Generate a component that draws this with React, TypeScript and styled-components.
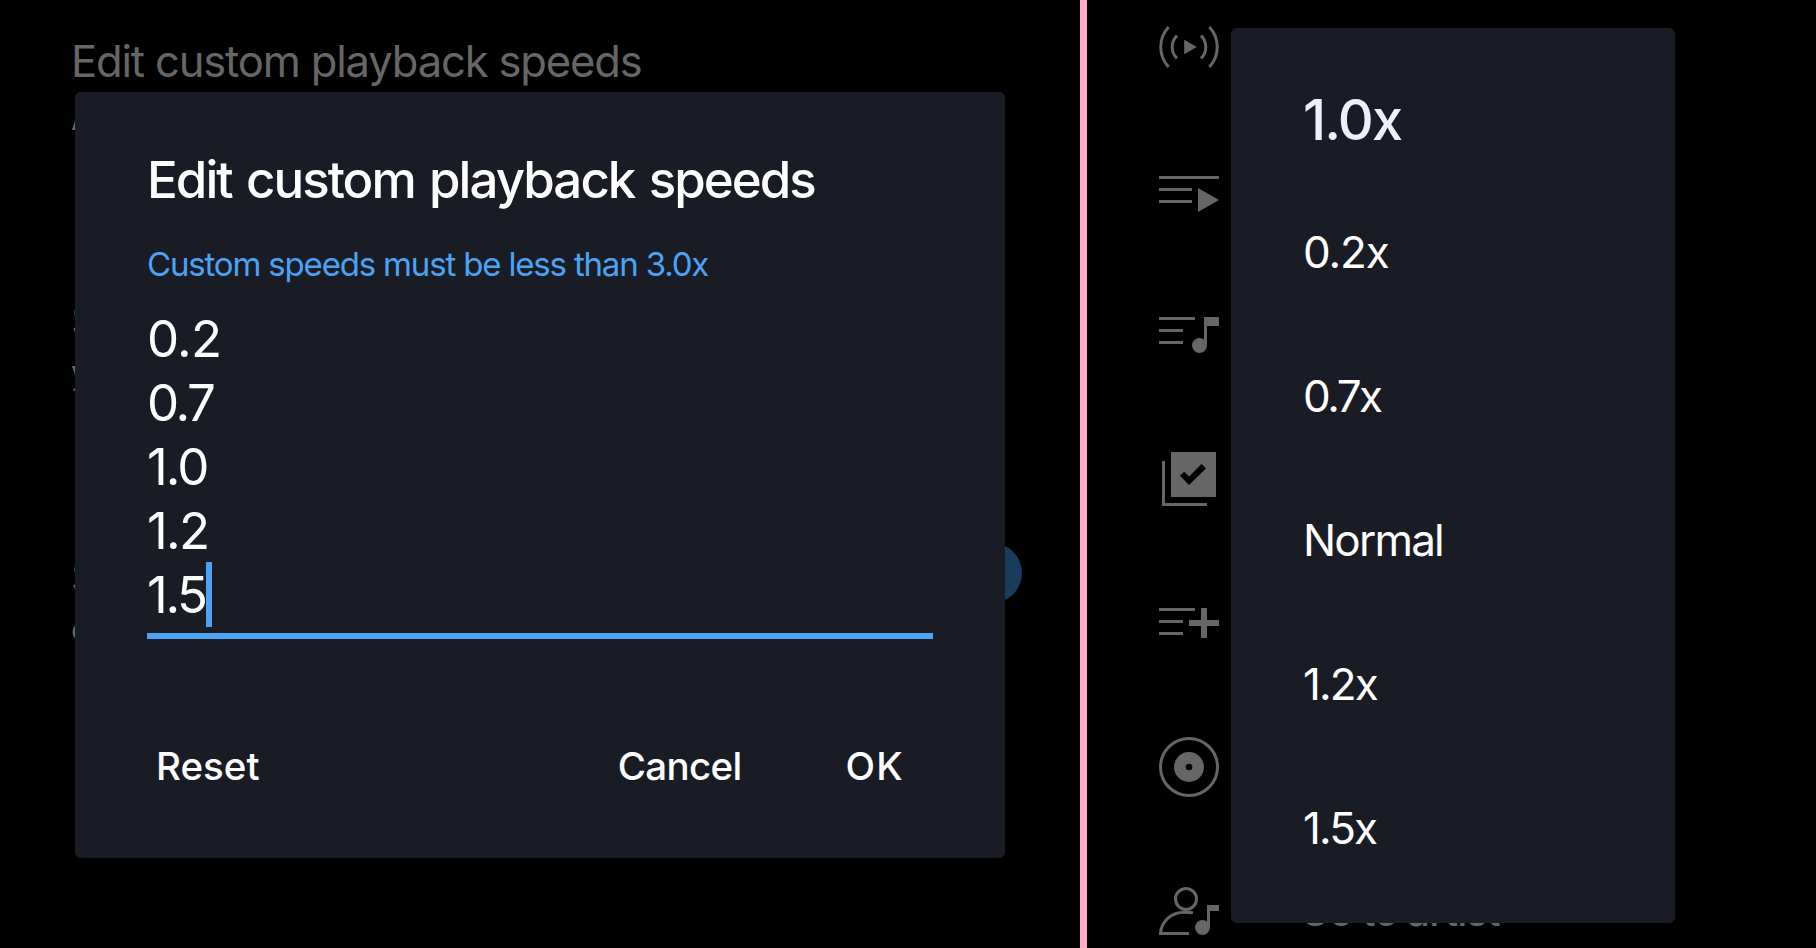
import React from 'react';
import styled, { createGlobalStyle } from 'styled-components';

const colors = {
  surface: '#1a1c25',
  accent: '#4ba3f3',
  dimmed: '#666666',
  divider: '#ffaac8',
};

const GlobalStyle = createGlobalStyle`
  *, *::before, *::after { box-sizing: border-box; }
  body {
    margin: 0;
    background: #000;
    color: #fff;
    font-family: Inter, 'Liberation Sans', sans-serif;
  }
  button {
    padding: 0;
    border: 0;
    background: none;
    color: inherit;
    font-family: inherit;
  }
`;

const Screen = styled.div`
  display: grid;
  grid-template-columns: 1080px 7px 1fr;
  width: 1816px;
  height: 948px;
  overflow: hidden;
`;

const Divider = styled.div`
  background: ${colors.divider};
`;

const Pane = styled.section`
  position: relative;
  overflow: hidden;
`;

/* Settings page under the dialog */

const Settings = styled.div`
  display: flex;
  flex-direction: column;
  padding: 34px 58px 0 71px;
  color: ${colors.dimmed};
`;

const Setting = styled.div<{ $height: number }>`
  display: flex;
  justify-content: space-between;
  align-items: flex-start;
  height: ${(p) => p.$height}px;
`;

const SettingName = styled.div`
  height: 54px;
  line-height: 54px;
  font-size: 43.5px;
  letter-spacing: -1.15px;
  white-space: nowrap;
`;

const SettingNote = styled.div<{ $gap?: number }>`
  margin-top: ${(p) => p.$gap ?? 0}px;
  height: 44px;
  line-height: 44px;
  font-size: 33px;
`;

const SwitchThumb = styled.span`
  width: 60px;
  height: 60px;
  margin-top: -7px;
  border-radius: 50%;
  background: #183d5c;
`;

/* Dialogs */

const Dialog = styled.div`
  position: absolute;
  display: flex;
  flex-direction: column;
  border-radius: 6px;
  background: ${colors.surface};
`;

const EditDialog = styled(Dialog)`
  left: 75px;
  top: 92px;
  width: 930px;
  height: 766px;
  padding: 56px 72px 60px;
`;

const Title = styled.h1`
  margin: 0 0 32px;
  font-size: 51px;
  font-weight: 500;
  line-height: 64px;
  letter-spacing: -1.95px;
  word-spacing: 2.6px;
  white-space: nowrap;
`;

const Hint = styled.p`
  margin: 0 0 23px;
  color: ${colors.accent};
  font-size: 33px;
  line-height: 40px;
  letter-spacing: -1.17px;
  white-space: nowrap;
`;

const Field = styled.div`
  height: 332px;
  border-bottom: 6px solid ${colors.accent};
`;

const FieldLine = styled.div<{ $tracking: number }>`
  position: relative;
  height: 64px;
  font-size: 51px;
  line-height: 64px;
  letter-spacing: ${(p) => p.$tracking}px;
`;

const Caret = styled.span`
  position: absolute;
  left: 59px;
  top: -1px;
  width: 6px;
  height: 65px;
  background: ${colors.accent};
`;

const Actions = styled.div`
  display: flex;
  margin-top: auto;
  padding: 0 29px 0 9px;
`;

const Action = styled.button<{ $tracking?: number }>`
  height: 64px;
  font-size: 38.5px;
  font-weight: 500;
  line-height: 64px;
  letter-spacing: ${(p) => p.$tracking ?? 0}px;

  &:first-child { margin-right: auto; }
  & + & + & { margin-left: 104px; }
`;

/* Track menu under the speed picker */

const TrackMenu = styled.div`
  display: flex;
  flex-direction: column;
  gap: 72px;
  padding: 11px 0 0 66px;
  color: ${colors.dimmed};
`;

const TrackMenuRow = styled.div`
  display: flex;
  align-items: center;
  gap: 75px;
  height: 72px;
  font-size: 40px;
  font-weight: 500;
  letter-spacing: -0.9px;
  white-space: nowrap;
`;

const SpeedDialog = styled(Dialog)`
  left: 144px;
  top: 28px;
  width: 444px;
  height: 895px;
  padding: 32px 72px 0;
`;

const CurrentSpeed = styled.div`
  height: 120px;
  color: #eeeeff;
  font-size: 55.8px;
  font-weight: 500;
  line-height: 120px;
  letter-spacing: -1.9px;
`;

const SpeedOption = styled.div<{ $tracking: number }>`
  height: 144px;
  font-size: 44px;
  line-height: 144px;
  letter-spacing: ${(p) => p.$tracking}px;
`;

const IconSvg = styled.svg`
  width: 72px;
  height: 72px;
  flex: none;
  fill: currentColor;
  stroke: none;

  .line {
    fill: none;
    stroke: currentColor;
    stroke-width: 1;
  }
`;

const Icon = ({ children }: { children: React.ReactNode }) => (
  <IconSvg viewBox="0 0 24 24">{children}</IconSvg>
);

const RadioIcon = () => (
  <Icon>
    <path className="line" d="M5.2 5.3A9.9 9.9 0 0 0 5.2 18.7M18.8 5.3A9.9 9.9 0 0 1 18.8 18.7" />
    <path className="line" d="M8 8.2A5.3 5.3 0 0 0 8 15.8M16 8.2A5.3 5.3 0 0 1 16 15.8" />
    <path d="M10.4 9.6V14.4L14.6 12Z" />
  </Icon>
);

const PlayNextIcon = () => (
  <Icon>
    <path d="M2 7H22V8H2ZM2 11H13V12H2ZM2 15H13V16H2ZM15 11V19L22 15Z" />
  </Icon>
);

const QueueIcon = () => (
  <Icon>
    <path d="M2 6H14V7H2ZM2 10H10V11H2ZM2 14H10V15H2Z" />
    <path d="M17 6H22V9H18V15.5H17Z" />
    <circle cx="15.5" cy="15.5" r="2.5" />
  </Icon>
);

const CollectionIcon = () => (
  <Icon>
    <path
      fillRule="evenodd"
      d="M6 3H21V18H6ZM9 10.95L12 14L17.65 8.5L16.2 7L12 11.2L10.4 9.55Z"
    />
    <path d="M3 6H4V20H18V21H3Z" />
  </Icon>
);

const PlaylistAddIcon = () => (
  <Icon>
    <path d="M2 7H14V8H2ZM2 11H10V12H2ZM2 15H10V16H2Z" />
    <path d="M16 7H18V11H22V13H18V17H16V13H12V11H16Z" />
  </Icon>
);

const AlbumIcon = () => (
  <Icon>
    <circle className="line" cx="12" cy="12" r="9.5" />
    <path
      fillRule="evenodd"
      d="M12 7A5 5 0 1 0 12 17A5 5 0 1 0 12 7ZM12 10.9A1.1 1.1 0 1 1 12 13.1A1.1 1.1 0 1 1 12 10.9Z"
    />
  </Icon>
);

const ArtistIcon = () => (
  <Icon>
    <circle className="line" cx="11" cy="8" r="3.5" />
    <path className="line" d="M12 19.5H2.5C2.8 15.3 6.2 12.4 10.5 12.4Q12 12.4 13.3 12.6" />
    <path d="M18 10H22V12H19V17.5H18Z" />
    <circle cx="16.5" cy="17.5" r="2.5" />
  </Icon>
);

const fieldLines = [
  { text: '0.2', tracking: -0.8 },
  { text: '0.7', tracking: -2.4 },
  { text: '1.0', tracking: -2 },
  { text: '1.2', tracking: -1.7 },
  { text: '1.5', tracking: -2.3 },
];

const speeds = [
  { text: '0.2x', tracking: -1.1 },
  { text: '0.7x', tracking: -2.5 },
  { text: 'Normal', tracking: -1.8 },
  { text: '1.2x', tracking: -1.9 },
  { text: '1.5x', tracking: -1.9 },
];

const trackActions = [
  { icon: <RadioIcon /> },
  { icon: <PlayNextIcon /> },
  { icon: <QueueIcon /> },
  { icon: <CollectionIcon /> },
  { icon: <PlaylistAddIcon /> },
  { icon: <AlbumIcon /> },
  { icon: <ArtistIcon />, label: 'Go to artist' },
];

export default function App() {
  return (
    <>
      <GlobalStyle />
      <Screen>
        <Pane>
          <Settings>
            <Setting $height={259}>
              <div>
                <SettingName>Edit custom playback speeds</SettingName>
                <SettingNote $gap={8}>A</SettingNote>
              </div>
            </Setting>
            <Setting $height={257}>
              <div>
                <SettingName>S</SettingName>
                <SettingNote $gap={3}>y</SettingNote>
              </div>
            </Setting>
            <Setting $height={120}>
              <div>
                <SettingName>S</SettingName>
                <SettingNote $gap={3}>c</SettingNote>
              </div>
              <SwitchThumb />
            </Setting>
          </Settings>
          <EditDialog role="dialog">
            <Title>Edit custom playback speeds</Title>
            <Hint>Custom speeds must be less than 3.0x</Hint>
            <Field>
              {fieldLines.map((line, i) => (
                <FieldLine key={line.text} $tracking={line.tracking}>
                  {line.text}
                  {i === fieldLines.length - 1 && <Caret />}
                </FieldLine>
              ))}
            </Field>
            <Actions>
              <Action>Reset</Action>
              <Action $tracking={-0.7}>Cancel</Action>
              <Action $tracking={1.3}>OK</Action>
            </Actions>
          </EditDialog>
        </Pane>
        <Divider />
        <Pane>
          <TrackMenu>
            {trackActions.map((action, i) => (
              <TrackMenuRow key={i}>
                {action.icon}
                {action.label}
              </TrackMenuRow>
            ))}
          </TrackMenu>
          <SpeedDialog role="dialog">
            <CurrentSpeed>1.0x</CurrentSpeed>
            {speeds.map((speed) => (
              <SpeedOption key={speed.text} $tracking={speed.tracking}>
                {speed.text}
              </SpeedOption>
            ))}
          </SpeedDialog>
        </Pane>
      </Screen>
    </>
  );
}
